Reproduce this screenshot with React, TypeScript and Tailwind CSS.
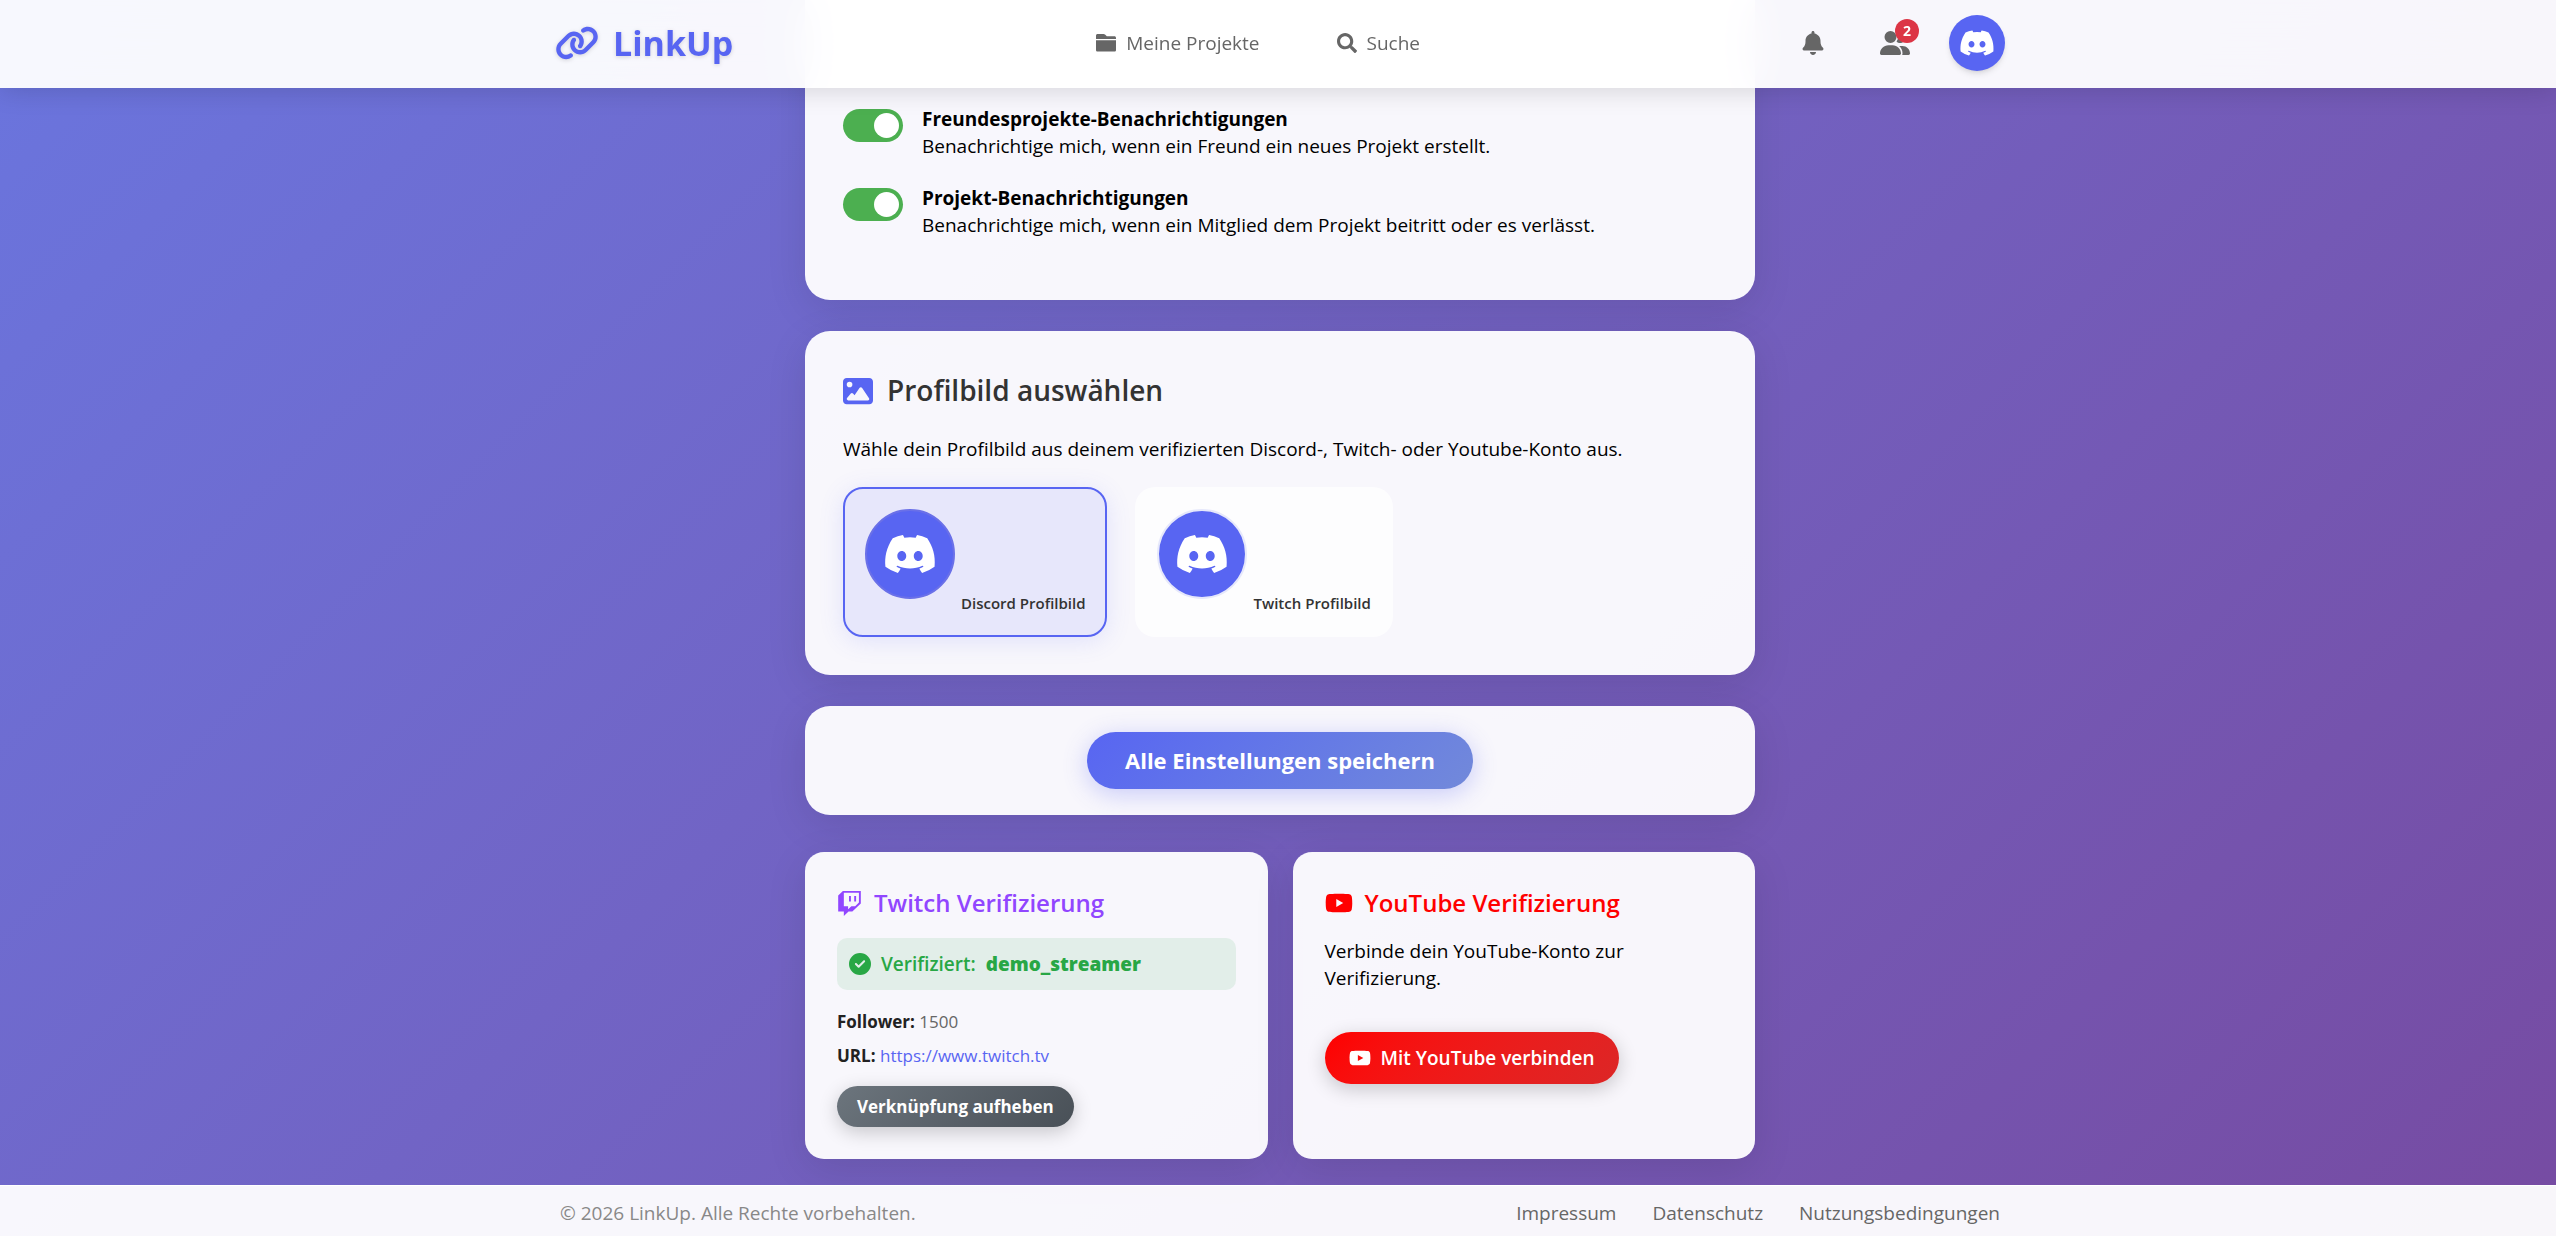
import React, { useState } from 'react';
import { FaSearch } from 'react-icons/fa';
import {
  FaBell,
  FaCircleCheck,
  FaDiscord,
  FaImage,
  FaLink,
  FaTwitch,
  FaUserGroup,
  FaYoutube,
} from 'react-icons/fa6';

const cardShadow = 'shadow-[0_10px_40px_rgba(0,0,0,0.1)]';

const FolderIcon: React.FC<{ className?: string }> = ({ className }) => (
  <svg viewBox="0 0 20 20" fill="currentColor" className={className} aria-hidden="true">
    <path d="M1.6 1h6c.6 0 1 .2 1.4.6L10.800 3.300H18.400c.9 0 1.600.7 1.600 1.600V6H0V2.600C0 1.700.7 1 1.600 1Z" />
    <path d="M0 7.300h20v9.600c0 .9-.7 1.600-1.600 1.600H1.600C.7 18.500 0 17.800 0 16.900Z" />
  </svg>
);

const Toggle: React.FC<{ id: string; title: string; text: string }> = ({ id, title, text }) => {
  const [on, setOn] = useState(true);

  return (
    <label htmlFor={id} className="flex items-start gap-[19px] cursor-pointer">
      <input id={id} type="checkbox" checked={on} onChange={() => setOn(!on)} className="peer sr-only" />
      <span className="w-[60px] h-[33px] mt-[3px] shrink-0 rounded-full bg-gray-300 p-1 transition-colors peer-checked:bg-[#4caf50] peer-checked:pl-[31px]">
        <span className="block w-[25px] h-[25px] rounded-full bg-white" />
      </span>
      <span className="leading-[27px]">
        <strong className="block font-bold">{title}</strong>
        {text}
      </span>
    </label>
  );
};

const pictures = [
  { id: 'discord', label: 'Discord Profilbild' },
  { id: 'twitch', label: 'Twitch Profilbild' },
];

const App: React.FC = () => {
  const [picture, setPicture] = useState('discord');

  return (
    <div className="min-h-screen flex flex-col bg-linear-135 from-[#6a75de] to-[#764ba2] font-['Open_Sans','Noto_Sans',sans-serif] text-[19px] text-black">

      {/* NAVBAR */}
      <header className="fixed top-0 inset-x-0 z-50 h-[88px] pl-1 pb-0.5 bg-white/95 backdrop-blur-[20px] shadow-[0_2px_25px_rgba(0,0,0,0.15)]">
        <div className="max-w-[1450px] h-full mx-auto flex items-center justify-between">
          <a href="#" className="flex items-center gap-[14px] text-[34px] font-bold text-[#5865f2]">
            <FaLink className="w-11 h-9 drop-shadow-sm" />
            <span className="drop-shadow-sm">LinkUp</span>
          </a>
          <nav className="flex items-center gap-[77px] text-[#666]">
            <a href="#" className="flex items-center gap-[10px]"><FolderIcon className="w-5 h-5" /> Meine Projekte</a>
            <a href="#" className="flex items-center gap-[10px]"><FaSearch className="w-5 h-5" /> Suche</a>
          </nav>
          <div className="flex items-center text-[#666]">
            <button aria-label="Benachrichtigungen" className="px-[18px] mr-9"><FaBell className="w-6 h-6" /></button>
            <button aria-label="Freunde" className="relative mr-[38px]">
              <FaUserGroup className="w-8 h-6" />
              <span className="absolute -top-3 -right-2 w-6 h-6 rounded-full bg-[#dc3545] text-white text-sm leading-6 font-bold">2</span>
            </button>
            <button aria-label="Profil" className="w-14 h-14 rounded-full bg-[#5865f2] text-white flex items-center justify-center shadow-md">
              <FaDiscord className="w-9 h-9" />
            </button>
          </div>
        </div>
      </header>

      <main className="w-full pl-1 flex-1">
        <div className="max-w-[950px] mx-auto">

          {/* NOTIFICATIONS */}
          <section className={`bg-white/95 rounded-b-[25px] px-[38px] pt-[106px] pb-[61px] space-y-[25px] ${cardShadow}`}>
            <Toggle id="friends" title="Freundesprojekte-Benachrichtigungen" text="Benachrichtige mich, wenn ein Freund ein neues Projekt erstellt." />
            <Toggle id="projects" title="Projekt-Benachrichtigungen" text="Benachrichtige mich, wenn ein Mitglied dem Projekt beitritt oder es verlässt." />
          </section>

          {/* PROFILE PICTURE */}
          <section className={`mt-[31px] bg-white/95 rounded-[25px] p-[38px] ${cardShadow}`}>
            <h2 className="flex items-center gap-[14px] text-[28px] leading-[43px] font-semibold text-[#333]">
              <FaImage className="w-[30px] h-[30px] text-[#5865f2]" />
              Profilbild auswählen
            </h2>
            <p className="mt-6 leading-[27px]">Wähle dein Profilbild aus deinem verifizierten Discord-, Twitch- oder Youtube-Konto aus.</p>
            <div className="mt-6 flex gap-7">
              {pictures.map(p => (
                <button
                  key={p.id}
                  onClick={() => setPicture(p.id)}
                  className={`h-[150px] rounded-[20px] border-2 p-5 flex items-start gap-[6px] ${picture === p.id ? 'border-[#5865f2] bg-[#5865f2]/10 shadow-[0_4px_25px_rgba(88,101,242,0.15)]' : 'border-transparent bg-white/70'}`}
                >
                  <span className={`w-[90px] h-[90px] rounded-full border-2 bg-[#5865f2] text-white flex items-center justify-center ${picture === p.id ? 'border-[#6a70e8]' : 'border-[#e6e8fb]'}`}>
                    <FaDiscord className="w-[54px] h-[54px]" />
                  </span>
                  <span className="self-end text-[15px] leading-6 font-semibold text-[#333]">{p.label}</span>
                </button>
              ))}
            </div>
          </section>

          {/* SAVE */}
          <section className={`mt-[31px] bg-white/95 rounded-[25px] py-[26px] flex justify-center ${cardShadow}`}>
            <button className="h-[57px] px-[38px] rounded-full bg-linear-135 from-[#5865f2] to-[#7289da] text-white text-[22px] font-bold shadow-[0_5px_25px_rgba(88,101,242,0.3)]">
              Alle Einstellungen speichern
            </button>
          </section>

          {/* VERIFICATION */}
          <div className="mt-[37px] mb-[25px] grid grid-cols-2 gap-[25px]">
            <section className={`bg-white/95 rounded-[19px] p-8 ${cardShadow}`}>
              <h3 className="flex items-center gap-3 text-2xl leading-[38px] font-semibold text-[#9146ff]">
                <FaTwitch className="w-[25px] h-[25px]" />
                Twitch Verifizierung
              </h3>
              <div className="mt-4 h-[52px] px-3 rounded-[10px] bg-[#28a745]/10 flex items-center gap-[10px] text-[#28a745] font-semibold">
                <FaCircleCheck className="w-[22px] h-[22px]" />
                <span>Verifiziert:</span>
                <strong className="font-extrabold">demo_streamer</strong>
              </div>
              <p className="mt-5 text-[17px] leading-6 text-[#666]"><strong className="font-bold text-[#222]">Follower:</strong> 1500</p>
              <p className="mt-[10px] text-[17px] leading-6"><strong className="font-bold text-[#222]">URL:</strong> <a href="#" className="text-[#5865f2]">https://www.twitch.tv</a></p>
              <button className="mt-[18px] h-[41px] px-5 rounded-full bg-linear-135 from-[#6c757d] to-[#495057] text-white text-[17px] font-bold shadow-[0_5px_19px_rgba(0,0,0,0.2)]">
                Verknüpfung aufheben
              </button>
            </section>

            <section className={`bg-white/95 rounded-[19px] p-8 ${cardShadow}`}>
              <h3 className="flex items-center gap-3 text-2xl leading-[38px] font-semibold text-[#ff0000]">
                <FaYoutube className="w-7 h-7" />
                YouTube Verifizierung
              </h3>
              <p className="mt-4 leading-[27px] max-w-[320px]">Verbinde dein YouTube-Konto zur Verifizierung.</p>
              <button className="mt-10 h-[52px] px-6 rounded-full bg-linear-135 from-[#ff0000] to-[#dc2626] text-white font-semibold flex items-center gap-[10px] shadow-[0_5px_19px_rgba(0,0,0,0.2)]">
                <FaYoutube className="w-[22px] h-[22px]" />
                Mit YouTube verbinden
              </button>
            </section>
          </div>
        </div>
      </main>

      {/* FOOTER */}
      <footer className="bg-white/95 border-t border-white pl-1 pt-3.5 pb-2.5">
        <div className="max-w-[1440px] mx-auto flex items-center justify-between leading-[26px] text-[#666]">
          <p className="text-[#888]">© 2026 LinkUp. Alle Rechte vorbehalten.</p>
          <nav className="flex gap-9">
            <a href="#">Impressum</a>
            <a href="#">Datenschutz</a>
            <a href="#">Nutzungsbedingungen</a>
          </nav>
        </div>
      </footer>
    </div>
  );
};

export default App;
